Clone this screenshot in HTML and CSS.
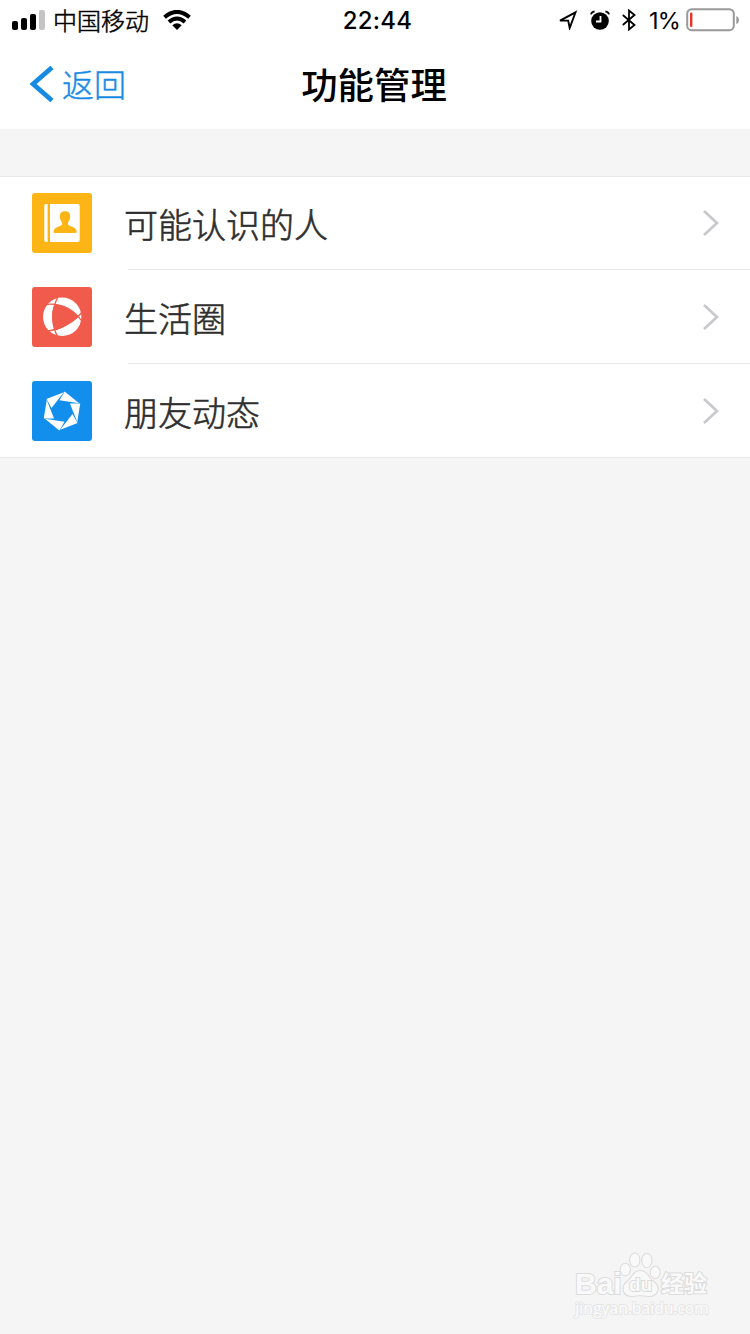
FILE: index.html
```html
<!DOCTYPE html>
<html lang="zh-CN">
<head>
<meta charset="utf-8">
<title>功能管理</title>
<link rel="stylesheet" href="styles.css">
</head>
<body>
<div class="screen">
  <header class="header">
    <div class="status">
      <div class="status-left">
        <svg class="signal" width="34" height="20" viewBox="0 0 34 20"><rect x="0" y="11" width="6" height="9" rx="2"/><rect x="9" y="8" width="6" height="12" rx="2"/><rect x="18" y="4" width="6" height="16" rx="2"/><rect x="27" y="0" width="6" height="20" rx="2" fill="#c4c4c4"/></svg>
        <span class="carrier">中国移动</span>
        <svg class="wifi" width="28" height="20" viewBox="0 0 28 20"><g fill="none" stroke="#000" stroke-width="4"><path d="M1.5 7.3Q14-3.5 26.5 7.3"/><path d="M6 12Q14 5 22 12"/></g><path d="M9.3 15.2Q14 11.3 18.7 15.2L14 20Z"/></svg>
      </div>
      <span class="time">22:44</span>
      <div class="status-right">
        <svg width="20" height="20" viewBox="0 0 20 20" fill="none" stroke="#000" stroke-width="1.9"><path d="M2 10.6 17.5 2.3 11.7 18 10.2 10.6Z"/></svg>
        <svg class="alarm" width="20" height="20" viewBox="0 0 20 20"><circle cx="10" cy="11" r="8.8"/><path d="M1 4.4Q1.6 2 4.6 1.4M19 4.4Q18.4 2 15.4 1.4" fill="none" stroke="#000" stroke-width="1.8"/><path d="M10.5 6V11.5H6" fill="none" stroke="#fff" stroke-width="1.8"/></svg>
        <svg class="bluetooth" width="14" height="22" viewBox="0 0 14 22" fill="none" stroke="#000" stroke-width="1.8"><path d="M.8 6 12.5 16 7 20.5V1.5L12.5 6 .8 16"/></svg>
        <span class="percent">1%</span>
        <svg class="battery" width="54" height="24" viewBox="0 0 54 24"><rect x="1.2" y="1.2" width="46.6" height="21" rx="4.5" fill="none" stroke="#999" stroke-width="2"/><path d="M50.3 8Q53 9 53 12T50.3 16Z" fill="#999"/><rect x="4" y="4.5" width="2.4" height="14.5" rx="1" fill="#e8332c"/></svg>
      </div>
    </div>
    <nav class="nav">
      <div class="back">
        <svg width="24" height="36" viewBox="0 0 24 36" fill="none" stroke="#178be4" stroke-width="4.8"><path d="M22 1.5 3 18 22 34.5"/></svg>
        <span>返回</span>
      </div>
      <h1 class="title">功能管理</h1>
    </nav>
  </header>
  <main class="list">
    <div class="row">
      <svg class="icon" viewBox="0 0 60 60"><rect width="60" height="60" rx="3" fill="#fdb515"/><path fill="#fff" d="M14 11h1.6v38H14q-1.7 0-1.7-1.7V12.7Q12.3 11 14 11ZM18 11h27.7q2 0 2 2v34q0 2-2 2H18Z"/><path fill="#fdb515" d="M33 18.2c3.6 0 5.5 2.3 5.2 5.8-.2 2.3-1 4-2.2 5.4v2.2c1 2 8.7 2.4 8.7 7.2q0 1.2-1.5 1.2H23q-1.4 0-1.4-1.2c0-4.8 7.5-5.2 8.5-7.2v-2.2c-1.3-1.4-2.1-3.1-2.3-5.4-.3-3.5 1.6-5.8 5.2-5.8Z"/></svg>
      <div class="cell"><span>可能认识的人</span><svg class="chevron" viewBox="0 0 18 28"><path d="M2 2 15 14 2 26"/></svg></div>
    </div>
    <div class="row">
      <svg class="icon" viewBox="0 0 60 60"><rect width="60" height="60" rx="3" fill="#f05b4c"/><circle cx="30.2" cy="29.8" r="19.2" fill="#fff"/><path fill="#f05b4c" d="M22.7 17Q36 19 46 29.5 36 39 23.5 43.5 17 30 22.7 17Z"/><g fill="none" stroke="#f05b4c" stroke-width="1.3"><path d="M15 17.3Q37 15.5 50.5 35M50.5 24.5Q38 40.5 14 44.5M26 9.5Q15.5 31 26 50.5"/></g></svg>
      <div class="cell"><span>生活圈</span><svg class="chevron" viewBox="0 0 18 28"><path d="M2 2 15 14 2 26"/></svg></div>
    </div>
    <div class="row">
      <svg class="icon" viewBox="0 0 60 60"><rect width="60" height="60" rx="3" fill="#128fec"/><g fill="#fff" transform="translate(30 30) rotate(-7)"><path id="blade" d="M-13.8-12.7-19 5.2-8.8 6.5Z"/><use href="#blade" transform="rotate(60)"/><use href="#blade" transform="rotate(120)"/><use href="#blade" transform="rotate(180)"/><use href="#blade" transform="rotate(240)"/><use href="#blade" transform="rotate(300)"/></g></svg>
      <div class="cell"><span>朋友动态</span><svg class="chevron" viewBox="0 0 18 28"><path d="M2 2 15 14 2 26"/></svg></div>
    </div>
  </main>
  <footer class="watermark">
    <div class="brand">
      <span class="bai">Bai</span>
      <span class="paw"><svg width="42" height="46" viewBox="0 0 40 46" preserveAspectRatio="none"><ellipse cx="6" cy="17.5" rx="4.9" ry="6.3"/><ellipse cx="15" cy="8" rx="4.9" ry="7"/><ellipse cx="26.5" cy="8.5" rx="4.9" ry="7"/><ellipse cx="34.5" cy="20.5" rx="4.7" ry="6.2"/><path d="M20 18.5C27 18.5 28 25 32 28.5 42 36 36 45 28 44.5 23 43.5 17 43.5 13 44.5 3 45 1 34.5 8 29 13 25 13.5 18.5 20 18.5Z"/></svg><span class="du">du</span></span>
      <span class="exp">经验</span>
    </div>
    <div class="site">jingyan.baidu.com</div>
  </footer>
</div>
</body>
</html>
```
FILE: styles.css
```css
body { margin: 0; }
* { box-sizing: border-box; }
.screen {
  width: 750px; height: 1334px; overflow: hidden;
  display: flex; flex-direction: column;
  background: #f5f5f5; color: #2e2e2e;
  font-family: "Noto Sans CJK SC", sans-serif;
}
svg { display: block; flex: none; }
.header { height: 129px; background: #fff; }
.status {
  height: 40px; padding: 0 10px 0 12px; color: #000;
  display: grid; grid-template-columns: 1fr auto 1fr; align-items: center;
  font-size: 24px; line-height: 40px;
}
.status-left, .status-right { display: flex; align-items: center; }
.status-right { justify-content: flex-end; }
.carrier { margin-left: 7px; font-weight: 300; -webkit-text-stroke: .5px currentColor; }
.wifi { margin-left: 14px; }
.time { font-family: Inter, sans-serif; font-weight: 500; letter-spacing: .2px; padding: 2px 0 0 3px; line-height: 38px; }
.alarm { margin-left: 12px; }
.bluetooth { margin-left: 12px; }
.percent { font-family: Inter, sans-serif; margin-left: 13px; font-size: 23.5px; letter-spacing: -.8px; padding-top: 2px; line-height: 38px; }
.battery { margin-left: 6px; }
.nav {
  height: 88px; padding: 0 30px;
  display: grid; grid-template-columns: 1fr auto 1fr; align-items: center;
}
.back { display: flex; align-items: center; gap: 8px; color: #178be4; font-size: 32px; font-weight: 300; line-height: 48px; -webkit-text-stroke: .4px currentColor; }
.back span { padding-bottom: 3px; }
.title { margin: 0 1px 0 -1px; padding-bottom: 2px; color: #000; font-size: 36.4px; line-height: 52px; font-weight: 500; }
.list { margin-top: 47px; background: #fff; border-top: 1px solid #e8e8e8; border-bottom: 1px solid #e8e8e8; }
.row { display: flex; height: 94px; padding-left: 32px; align-items: center; }
.row:first-child { height: 93px; }
.row:first-child .icon { margin-bottom: 1px; }
.row:last-child { height: 93px; }
.icon { width: 60px; height: 60px; }
.cell {
  flex: 1; height: 100%; margin-left: 36px; padding-right: 30px;
  border-bottom: 1px solid #e8e8e8;
  display: flex; align-items: center; justify-content: space-between;
  font-size: 34px; font-weight: 300; line-height: 50px; -webkit-text-stroke: .6px currentColor;
}
.cell span { margin-left: -4px; padding-top: 2px; }
.row:last-child .cell { border-bottom: 0; }
.chevron { width: 18px; height: 28px; fill: none; stroke: #c7c7cc; stroke-width: 2.6; }
.watermark { margin: auto 40px 16px auto; width: 135px; color: #f9f9f9; }
.brand { display: flex; align-items: flex-end; height: 46px; }
.bai, .exp, .du, .site { paint-order: stroke fill; -webkit-text-stroke: 2px #dcdcdc; }
.bai { font: bold 30px/28px "Liberation Sans", sans-serif; width: 44px; }
.paw { position: relative; width: 42px; }
.paw svg { fill: #f9f9f9; stroke: #dcdcdc; stroke-width: 1; }
.du { position: absolute; left: 10px; bottom: 2px; font: bold 19px/22px "Liberation Sans", sans-serif; }
.exp { font-size: 23px; font-weight: 700; line-height: 31px; }
.site { font: 600 15.5px/20px "Open Sans", sans-serif; letter-spacing: -.2px; -webkit-text-stroke: 1.5px #e3e3e3; }
```
